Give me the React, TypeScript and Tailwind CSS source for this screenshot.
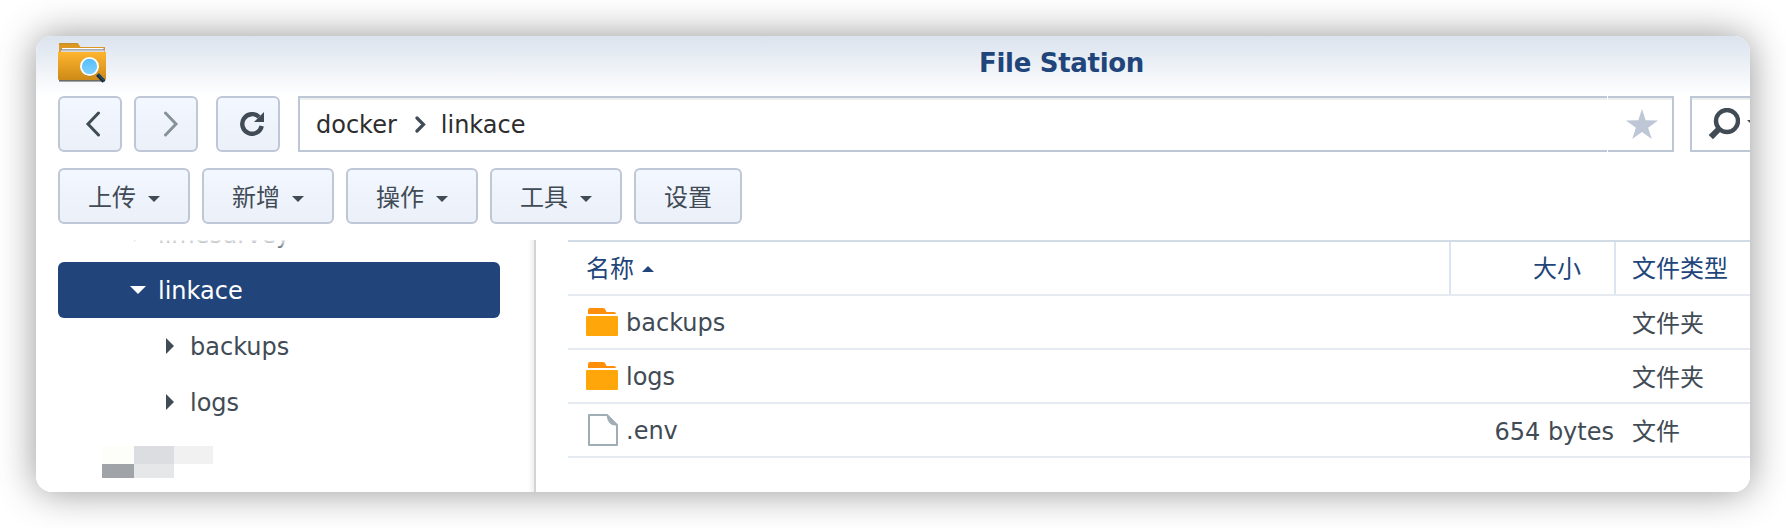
import React from "react";

type IconProps = { className?: string };

function FolderSearchLogo() {
  return (
    <svg width="52" height="44" viewBox="0 0 52 44" className="block">
      <defs>
        <linearGradient id="front" x1="0" y1="0" x2="0" y2="1">
          <stop offset="0" stopColor="#feb42e" />
          <stop offset="1" stopColor="#cd8a17" />
        </linearGradient>
        <linearGradient id="lens" x1="0" y1="0" x2="0" y2="1">
          <stop offset="0" stopColor="#52bdfb" />
          <stop offset="1" stopColor="#84d2fd" />
        </linearGradient>
        <filter id="soft" x="-10%" y="-10%" width="120%" height="130%">
          <feGaussianBlur stdDeviation="0.7" />
        </filter>
      </defs>
      <rect x="1" y="36" width="46" height="3.6" fill="#33302c" opacity="0.7" filter="url(#soft)" />
      <path d="M1 1.3 H20 L22.500 5 H47 V12 H1 Z" fill="#dc9823" />
      <path d="M1 1.700 H20" stroke="#b97f1d" strokeWidth="0.8" />
      <path d="M3 6.500 H46.500 V10 H3 Z" fill="#8e8f94" />
      <path d="M4 6.700 H45.500" stroke="#ffffff" strokeWidth="1.2" />
      <path d="M3 9.200 H46.500" stroke="#f4f4f6" strokeWidth="1.200" />
      <path d="M0 10 H48 V36.500 Q48 38 46.500 38 H1.500 Q0 38 0 36.500 Z" fill="url(#front)" />
      <path d="M39.500 32.500 L46 39.500" stroke="#1b2b3a" strokeWidth="4" />
      <path d="M40 32 L46 38.500" stroke="#17557f" strokeWidth="1.300" />
      <circle cx="31.500" cy="25" r="9.500" fill="#8a5f16" opacity="0.45" filter="url(#soft)" />
      <circle cx="31.500" cy="24.500" r="8.600" fill="url(#lens)" stroke="#fffdf6" strokeWidth="1.900" />
    </svg>
  );
}

function CaretDown({ className }: IconProps) {
  return (
    <svg width="12" height="6" viewBox="0 0 12 6" className={className}>
      <path d="M0 0 H12 L6 6 Z" fill="currentColor" />
    </svg>
  );
}

function CaretRight({ className }: IconProps) {
  return (
    <svg width="8" height="16" viewBox="0 0 8 16" className={className}>
      <path d="M0 0 L8 8 L0 16 Z" fill="currentColor" />
    </svg>
  );
}

function FolderIcon() {
  return (
    <svg width="32" height="28" viewBox="0 0 32 28" className="block">
      <path d="M2 6 V2 Q2 0 4 0 H17 Q19 0 19.500 2 L20.500 4 H28 Q30 4 30 6 Z" fill="#ff8f0b" />
      <rect x="0" y="8" width="32" height="20" rx="1" fill="#ffa60a" />
    </svg>
  );
}

function FileIcon() {
  return (
    <svg width="32" height="32" viewBox="0 0 32 32" className="block">
      <path d="M3 1 H21 L31 11 V31 H3 Z" fill="#fff" stroke="#9fadb6" strokeWidth="2" strokeLinejoin="round" />
      <path d="M20.500 1 L31 11.500 Q26 12 23.500 9 Q21 6 20.500 1 Z" fill="#9fadb6" />
    </svg>
  );
}

const raised =
  "flex h-14 shrink-0 rounded-[6px] border-2 border-[#bdc7d5] bg-linear-to-b from-[#f3f7ff] to-[#ebf0f9]";

function ToolButton({ label }: { label: string }) {
  return (
    <button className={`${raised} w-[132px] items-center pl-[28px] text-[#414b55]`}>
      <span className="pt-[3px] leading-none">{label}</span>
      <CaretDown className="mt-[6px] ml-3" />
    </button>
  );
}

const rows = [
  { name: "backups", size: "", type: "文件夹", folder: true },
  { name: "logs", size: "", type: "文件夹", folder: true },
  { name: ".env", size: "654 bytes", type: "文件", folder: false },
];

export default function App() {
  return (
    <div className="h-[528px] w-[1786px] overflow-hidden bg-white p-9 font-['DejaVu_Sans','Noto_Sans_CJK_SC',sans-serif] text-[24px] text-[#414b55]">
      <div className="h-[456px] w-[1714px] rounded-[16px] shadow-[0_0_38px_rgba(0,0,0,0.42)]">
        <div className="flex h-full flex-col overflow-hidden rounded-[16px] bg-white">
          <header className="grid h-[60px] shrink-0 grid-cols-[288px_1fr] bg-linear-to-b from-[#dbe3ee] to-white pl-[22px]">
            <div className="pt-[6px]">
              <FolderSearchLogo />
            </div>
            <h1 className="pt-[10px] pl-[633px] text-[26px] leading-[34px] font-bold tracking-[-0.3px] text-[#21457a]">
              File Station
            </h1>
          </header>

          <div className="flex h-14 shrink-0 pl-[22px]">
            <button className={`${raised} w-16 items-center justify-center`}>
              <svg width="16" height="26" viewBox="0 0 16 26" className="ml-[6px]">
                <path d="M13.500 2 L3 13 L13.500 24" fill="none" stroke="#414b55" strokeWidth="3" strokeLinecap="round" />
              </svg>
            </button>
            <button className={`${raised} ml-3 w-16 items-center justify-center`}>
              <svg width="16" height="26" viewBox="0 0 16 26" className="ml-[10px]">
                <path d="M2.500 2 L13 13 L2.500 24" fill="none" stroke="#88929b" strokeWidth="3" strokeLinecap="round" />
              </svg>
            </button>
            <button className={`${raised} ml-[18px] w-16 items-center pl-[22px]`}>
              <svg width="24" height="24" viewBox="0 0 24 24">
                <path d="M21.700 14 A9.800 9.800 0 1 1 19 5" fill="none" stroke="#414b55" strokeWidth="4.400" />
                <path d="M24 0 V10 H14 Z" fill="#414b55" />
              </svg>
            </button>
            <div className="ml-[18px] flex w-[1309px] shrink-0 items-center border-2 border-r-0 border-[#bdc7d5] bg-white pl-4 text-[#2d2d2d] shadow-[inset_0_2px_0_#eeeff0]">
              <span className="pt-[2px]">docker</span>
              <svg width="11" height="17" viewBox="0 0 11 17" className="mt-px ml-[18px]">
                <path d="M2 2 L8.500 8.500 L2 15" fill="none" stroke="#414b55" strokeWidth="3.200" strokeLinecap="round" />
              </svg>
              <span className="ml-[15px] pt-[2px]">linkace</span>
            </div>
            <div className="ml-px flex w-[66px] shrink-0 items-center justify-end border-2 border-l-0 border-[#bdc7d5] bg-white pr-[14px] shadow-[inset_0_2px_0_#eeeff0]">
              <svg width="32" height="30" viewBox="0 0 32 30">
                <path
                  d="M16 0 L19.700 11.300 L32 11.500 L22.100 18.700 L25.800 30 L16 23.100 L6.200 30 L9.900 18.700 L0 11.500 L12.300 11.300 Z"
                  fill="#bdc7d5"
                />
              </svg>
            </div>
            <div className="ml-4 flex w-20 shrink-0 border-2 border-[#bdc7d5] bg-white pt-[10px] pl-4 shadow-[inset_0_2px_0_#eeeff0]">
              <svg width="32" height="32" viewBox="0 0 32 32">
                <circle cx="19" cy="13" r="11" fill="none" stroke="#414b55" strokeWidth="4.400" />
                <path d="M11.500 20.500 L2.800 29.200" stroke="#414b55" strokeWidth="6" />
              </svg>
              <CaretDown className="mt-[12px] ml-[7px]" />
            </div>
          </div>

          <div className="mt-4 flex shrink-0 gap-3 pl-[22px]">
            <ToolButton label="上传" />
            <ToolButton label="新增" />
            <ToolButton label="操作" />
            <ToolButton label="工具" />
            <button className={`${raised} w-[108px] items-center justify-center text-[#414b55]`}>
              <span className="pt-[3px] leading-none">设置</span>
            </button>
          </div>

          <main className="mt-4 flex min-h-0 flex-1">
            <nav className="h-full w-[464px] shrink-0 overflow-hidden pl-[22px]">
              <div className="relative flex h-[22px] items-end overflow-hidden pl-[72px]">
                <CaretRight className="mb-5 ml-1 shrink-0" />
                <span className="-mb-px ml-[16px] leading-[56px] text-[#414b55]">limesurvey</span>
                <div className="absolute inset-x-0 top-0 h-2 bg-linear-to-b from-white/90 to-white/20" />
              </div>
              <div className="flex h-14 w-[442px] items-center rounded-[6px] bg-[#21457a] pl-[72px] text-white">
                <svg width="16" height="8" viewBox="0 0 16 8">
                  <path d="M0 0 H16 L8 8 Z" fill="currentColor" />
                </svg>
                <span className="ml-3 pt-[2px]">linkace</span>
              </div>
              <div className="flex h-14 items-center pl-[108px]">
                <CaretRight />
                <span className="ml-4 pt-[2px]">backups</span>
              </div>
              <div className="flex h-14 items-center pl-[108px]">
                <CaretRight />
                <span className="ml-4 pt-[2px]">logs</span>
              </div>
              <div className="mt-4 ml-[44px] grid w-[111px] grid-cols-[32px_40px_39px] grid-rows-[18px_14px]">
                <div className="bg-[#fdfdfa]" />
                <div className="bg-[#dcdde0]" />
                <div className="bg-[#f1f1f1]" />
                <div className="bg-[#a0a4a9]" />
                <div className="bg-[#e6e7e9]" />
              </div>
            </nav>
            <div className="ml-7 h-full w-2 shrink-0 border-r-2 border-[#d2d4d6] bg-linear-to-r from-white to-[#efefef]" />
            <section className="ml-8 flex min-w-0 flex-1 flex-col border-t-2 border-[#d0dbe6]">
              <div className="grid h-[54px] shrink-0 grid-cols-[881px_167px_1fr] border-b-2 border-[#e5ebf1] text-[#21457a]">
                <div className="flex items-center pl-[18px]">
                  <span className="pt-[2px] leading-none">名称</span>
                  <CaretDown className="mt-[2px] ml-2 rotate-180" />
                </div>
                <div className="flex items-center justify-end border-x-2 border-[#dbe5f1] pr-[33px]">
                  <span className="pt-[2px] leading-none">大小</span>
                </div>
                <div className="flex items-center pl-4">
                  <span className="pt-[2px] leading-none">文件类型</span>
                </div>
              </div>
              {rows.map((row) => (
                <div
                  key={row.name}
                  className="grid h-[54px] shrink-0 grid-cols-[881px_167px_1fr] items-center border-b-2 border-[#e5ebf1]"
                >
                  <div className="flex items-center pl-[18px]">
                    {row.folder ? <FolderIcon /> : <FileIcon />}
                    <span className="ml-[8px] pt-[2px]">{row.name}</span>
                  </div>
                  <div className="pt-[3px] pr-[2px] text-right">{row.size}</div>
                  <div className="pt-[4px] pl-4 leading-none">{row.type}</div>
                </div>
              ))}
            </section>
          </main>
        </div>
      </div>
    </div>
  );
}
